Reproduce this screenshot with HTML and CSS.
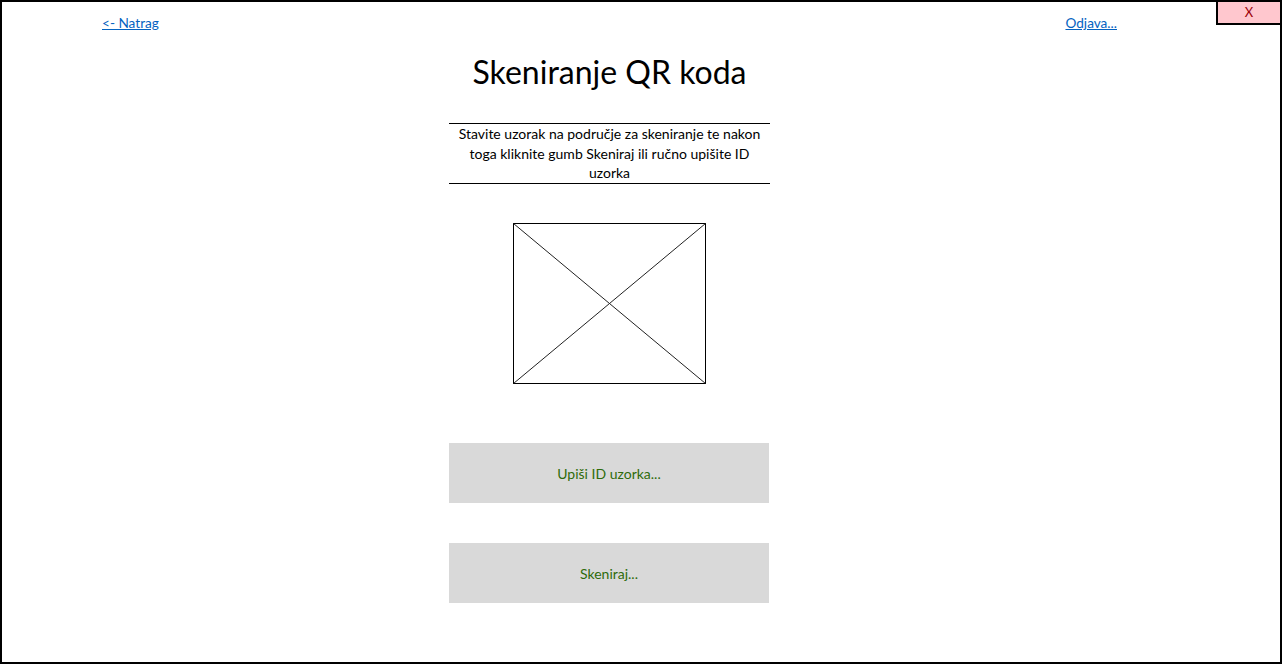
FILE: index.html
```html
<!DOCTYPE html>
<html>
<head>
<meta charset="utf-8">
<link rel="stylesheet" href="styles.css">
</head>
<body>
<div class="frame">
  <div class="close">X</div>
  <div class="topbar">
    <a class="link" href="#">&lt;- Natrag</a>
    <a class="link" href="#">Odjava...</a>
  </div>
  <div class="column">
    <h1 class="title">Skeniranje QR koda</h1>
    <div class="desc">Stavite uzorak na područje za skeniranje te nakon toga kliknite gumb Skeniraj ili ručno upišite ID uzorka</div>
    <div class="placeholder">
      <svg width="193" height="161" viewBox="0 0 193 161" class="ph-svg">
        <rect x="0.5" y="0.5" width="192" height="160" fill="#fff" stroke="#000" stroke-width="1"/>
        <line x1="0.5" y1="0.5" x2="192.5" y2="160.5" stroke="#222" stroke-width="1"/>
        <line x1="192.5" y1="0.5" x2="0.5" y2="160.5" stroke="#222" stroke-width="1"/>
      </svg>
    </div>
    <div class="btn btn-first">Upiši ID uzorka...</div>
    <div class="btn btn-second">Skeniraj...</div>
  </div>
</div>
</body>
</html>
```
FILE: styles.css
```css
html, body {
  margin: 0;
  padding: 0;
  background: #fff;
}
body {
  font-family: Lato, "Liberation Sans", sans-serif;
  color: #000;
}
.frame {
  position: relative;
  width: 1282px;
  height: 664px;
  box-sizing: border-box;
  border: 2px solid #000;
}
.close {
  position: absolute;
  top: -2px;
  right: 0;
  width: 64px;
  height: 25px;
  box-sizing: border-box;
  border-left: 2px solid #000;
  border-bottom: 2px solid #000;
  border-top: 2px solid #000;
  background: #ffc7ce;
  color: #9c0006;
  font-size: 13px;
  line-height: 21px;
  text-align: center;
}
.topbar {
  display: flex;
  justify-content: space-between;
  padding: 12px 0 0 100px;
  width: 1015px;
}
.link {
  color: #0563c1;
  text-decoration: underline;
  font-size: 13.6px;
  line-height: 18px;
}
.column {
  margin-left: 447px;
  width: 321px;
  display: flex;
  flex-direction: column;
  align-items: center;
}
.title {
  margin: 19px 0 0 0;
  font-weight: normal;
  font-size: 32px;
  line-height: 42px;
}
.desc {
  margin-top: 30px;
  width: 321px;
  height: 61px;
  box-sizing: border-box;
  border-top: 1px solid #000;
  border-bottom: 1px solid #000;
  padding: 0 4px;
  font-size: 14px;
  line-height: 19.6px;
  text-align: center;
}
.placeholder {
  margin-top: 39px;
  height: 161px;
}
.ph-svg {
  display: block;
}
.btn {
  width: 320px;
  height: 60px;
  background: #d9d9d9;
  color: #2e6b0a;
  font-size: 14px;
  display: flex;
  align-items: center;
  justify-content: center;
  align-self: flex-start;
}
.btn-first {
  margin-top: 59px;
}
.btn-second {
  margin-top: 40px;
}
```
